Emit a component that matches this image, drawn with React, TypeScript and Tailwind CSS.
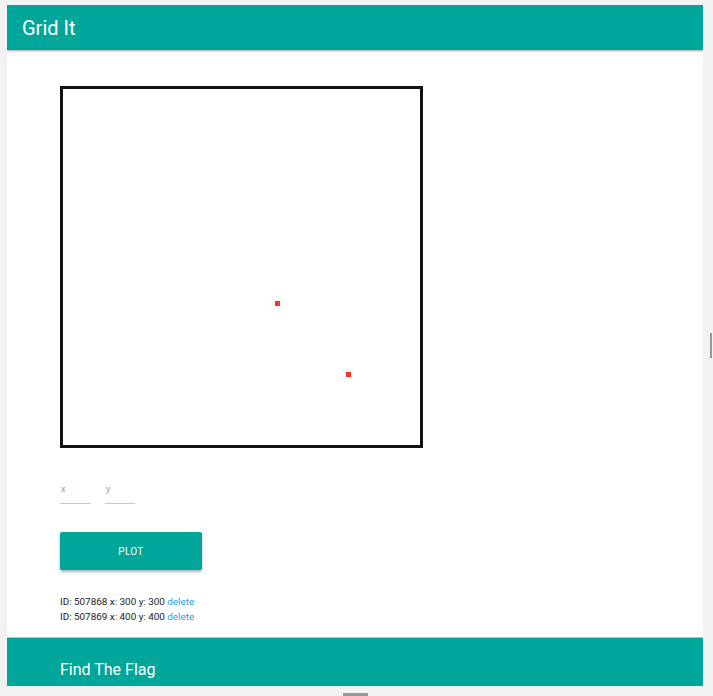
import React from "react";

const points = [
  { id: 507868, x: 300, y: 300 },
  { id: 507869, x: 400, y: 400 },
];

// canvas is drawn at 0.713 of its logical 500px size
const SCALE = 0.713;

export default function App() {
  return (
    <div
      className="relative w-[713px] h-[696px] overflow-hidden bg-[#f2f2f2]"
      style={{ fontFamily: "Roboto, 'Liberation Sans', sans-serif" }}
    >
      <div className="ml-[7px] mt-[5px] w-[696px] h-[681px] bg-white overflow-hidden flex flex-col">
        {/* Header */}
        <div className="h-[45px] shrink-0 bg-[#00a69a] flex items-center pl-[15px] shadow-[0_1px_2px_rgba(0,0,0,0.35)] relative z-10">
          <span className="text-white text-[20px] leading-none">Grid It</span>
        </div>

        {/* Body */}
        <div className="flex-1 pl-[53px] pt-[36px] flex flex-col">
          <div className="relative w-[363px] h-[362px] border-[3px] border-[#111]">
            {points.map((p) => (
              <div
                key={p.id}
                className="absolute w-[5px] h-[5px] bg-[#ff3322]"
                style={{ left: p.x * SCALE - 2, top: p.y * SCALE - 2 }}
              />
            ))}
          </div>

          {/* Inputs */}
          <div className="flex gap-[14px] mt-[37px]">
            <div className="w-[31px] border-b border-[#c8c8c8] h-[19px]">
              <span className="block text-[9px] leading-none text-[#a0a0a0] pl-[1px]">x</span>
            </div>
            <div className="w-[30px] border-b border-[#c8c8c8] h-[19px]">
              <span className="block text-[9px] leading-none text-[#a0a0a0] pl-[1px]">y</span>
            </div>
          </div>

          <button className="mt-[28px] w-[142px] h-[38px] bg-[#00a69a] text-white text-[10px] tracking-[0.3px] rounded-[2px] shadow-[0_2px_3px_rgba(0,0,0,0.3)]">
            PLOT
          </button>

          <div className="mt-[25px] flex flex-col gap-[2px]">
            {points.map((p) => (
              <div key={p.id} className="text-[9.9px] leading-[13px] text-[#222]">
                ID: {p.id} x: {p.x} y: {p.y}{" "}
                <span className="text-[#1e9be9]">delete</span>
              </div>
            ))}
          </div>
        </div>

        {/* Find The Flag */}
        <div className="h-[49px] shrink-0 bg-[#00a69a] border-t border-[#8ad6cf] flex items-center pl-[53px]">
          <span className="text-white text-[16px] leading-none pt-[16px]">Find The Flag</span>
        </div>
      </div>

      {/* scroll thumbs */}
      <div className="absolute left-[710px] top-[333px] w-[2px] h-[25px] bg-[#999]" />
      <div className="absolute left-[343px] top-[693px] w-[25px] h-[3px] bg-[#999]" />
    </div>
  );
}
